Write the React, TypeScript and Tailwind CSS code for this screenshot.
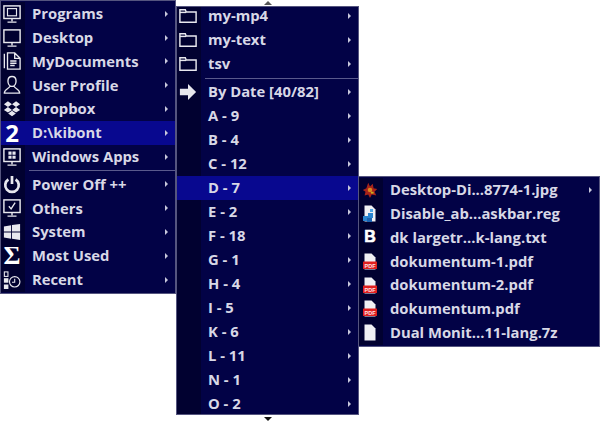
import React from "react";

const white = "#e8e8ee";

const Monitor = ({ inner }: { inner?: React.ReactNode }) => (
  <svg width="18" height="20" viewBox="0 0 20 22" fill="none" stroke={white}>
    <rect x="1" y="2" width="18" height="14" strokeWidth="1.600" />
    {inner}
    <path d="M10 16v3M5 20h10" strokeWidth="1.600" />
  </svg>
);

const FileDoc = () => (
  <svg width="18" height="20" viewBox="0 0 20 22" fill="none" stroke={white} strokeWidth="1.500">
    <path d="M1.500 3v16M5 2v18h14V8l-6-6zM13 2v6h6M8 11h7M8 13.500h7M8 16h5" />
  </svg>
);

const User = () => (
  <svg width="18" height="20" viewBox="0 0 20 22" fill="none" stroke={white} strokeWidth="1.500">
    <path d="M10 1.500c-3 0-4.500 2-4.500 5 0 3 1.500 6 4.500 6s4.500-3 4.500-6c0-3-1.500-5-4.500-5zM7.500 12.500c0 2.500-6 2.500-6 7.500h17c0-5-6-5-6-7.500" />
  </svg>
);

const Dropbox = () => (
  <svg width="18" height="18" viewBox="0 0 20 20" fill={white}>
    <path d="M5.500 1.500 1 4.700l4.500 3.100L10 4.700zM14.500 1.500 10 4.700l4.500 3.100L19 4.700zM5.500 7.800 1 11l4.500 3L10 11zM14.500 7.800 10 11l4.500 3 4.500-3zM5.700 15l4.300 3 4.300-3-4.300-3z" />
  </svg>
);

const Power = () => (
  <svg width="18" height="20" viewBox="0 0 20 22" fill="none" stroke={white} strokeWidth="3">
    <path d="M6 6a7.500 7.500 0 1 0 8 0M10 2v9" />
  </svg>
);

const Windows = () => (
  <svg width="18" height="18" viewBox="0 0 20 20" fill={white}>
    <path d="M1 4l8-1.500V9.500H1zM10 2.300 19 1v8.500h-9zM1 10.500h8v7L1 16zM10 10.500h9V19l-9-1.500z" />
  </svg>
);

const Recent = () => (
  <svg width="18" height="20" viewBox="0 0 20 22" fill="none" stroke={white}>
    <rect x="1.500" y="2" width="4" height="5" strokeWidth="1.200" />
    <rect x="1" y="9" width="5" height="5" fill={white} stroke="none" />
    <rect x="1" y="16" width="5" height="5" fill={white} stroke="none" />
    <circle cx="13" cy="13" r="5.800" strokeWidth="1.300" />
    <path d="M13 9.500v4h-3" strokeWidth="1.200" />
  </svg>
);

const Folder = () => (
  <svg width="18" height="18" viewBox="0 0 20 20" fill="none" stroke={white} strokeWidth="1.600">
    <path d="M1 17V3h6l1 2.500h11V17z" />
    <path d="M1 6h7" />
  </svg>
);

const ArrowRight = () => (
  <svg width="18" height="18" viewBox="0 0 20 20" fill={white}>
    <path d="M1 6.500h9V1l9 9-9 9v-5.500H1z" />
  </svg>
);

const PageBase = ({ children }: { children?: React.ReactNode }) => (
  <svg width="14" height="17" viewBox="0 0 14 17">
    <path d="M1.500 0.500h7l4 4v12h-11z" fill="#f0f0f4" />
    {children}
  </svg>
);

const Pdf = () => (
  <PageBase>
    <rect x="0" y="8.500" width="14" height="7.500" rx="0.500" fill="#e01f1f" />
    <text x="7" y="14.500" textAnchor="middle" fontSize="5.500" fontWeight="700" fill="#ffe4e4" fontFamily="'Liberation Sans', sans-serif">PDF</text>
  </PageBase>
);

const Reg = () => (
  <PageBase>
    <rect x="0" y="11" width="5" height="5" fill="#2a84d0" />
    <rect x="5" y="8" width="5" height="5" fill="#2a84d0" />
    <rect x="4" y="13" width="5" height="4" fill="#1c63b0" />
    <rect x="7" y="4" width="3" height="3" fill="#4ea6e6" />
  </PageBase>
);

const Jpg = () => (
  <svg width="18" height="18" viewBox="0 0 20 20">
    <path d="M8 2l2 4 3-3 1 5 4 1-3 3 2 4-5-1-2 4-2-4-4 1 1-4-3-2 4-2z" fill="#a8241a" />
    <circle cx="10" cy="10" r="2.500" fill="#d88a20" />
    <rect x="11" y="12" width="3" height="2" fill="#c8b020" />
  </svg>
);

const Arrow = () => (
  <span className="h-0 w-0 border-y-[3px] border-l-[3px] border-y-transparent border-l-[#c8c8dc]" />
);

type RowProps = {
  icon: React.ReactNode;
  label: string;
  arrow?: boolean;
  active?: boolean;
  height: string;
};

const Row = ({ icon, label, arrow = true, active, height }: RowProps) => (
  <div className={`flex shrink-0 items-center ${height} ${active ? "bg-[#08088f]" : ""}`}>
    <div className={`flex h-full w-[24px] shrink-0 items-center pl-[2px] ${active ? "" : "bg-[#010130]"}`}>
      <div className="flex w-[18px] items-center justify-center">{icon}</div>
    </div>
    <span className="mb-[1px] ml-[7px] flex-1 whitespace-nowrap text-[14.8px] font-bold text-[#d8d8e6]">{label}</span>
    {arrow && <span className="mr-[7px] flex"><Arrow /></span>}
  </div>
);

const Separator = () => (
  <div className="flex h-[4px] shrink-0 items-center">
    <div className="h-full w-[24px] bg-[#010130]" />
    <div className="ml-[4px] h-px flex-1 bg-[#5a5a8c]" />
  </div>
);

const first: { icon: React.ReactNode; label: string; active?: boolean }[] = [
  { icon: <Monitor inner={<rect x="5" y="5" width="10" height="8" strokeWidth="1.300" />} />, label: "Programs" },
  { icon: <Monitor />, label: "Desktop" },
  { icon: <FileDoc />, label: "MyDocuments" },
  { icon: <User />, label: "User Profile" },
  { icon: <Dropbox />, label: "Dropbox" },
  { icon: <span className="text-[24px] font-bold leading-none text-white">2</span>, label: "D:\\kibont", active: true },
  { icon: <Monitor inner={<path d="M6 5h3.500v3.500H6zM10.500 5H14v3.500h-3.500zM6 9.500h3.500V13H6zM10.500 9.500H14V13h-3.500z" fill={white} stroke="none" />} />, label: "Windows Apps" },
];

const firstBottom: { icon: React.ReactNode; label: string }[] = [
  { icon: <Power />, label: "Power Off ++" },
  { icon: <Monitor inner={<path d="M6.500 9l2.500 3 4.500-7" strokeWidth="1.500" />} />, label: "Others" },
  { icon: <Windows />, label: "System" },
  { icon: <span className="text-[26px] font-bold leading-none text-white" style={{ fontFamily: "'Liberation Serif', serif" }}>Σ</span>, label: "Most Used" },
  { icon: <Recent />, label: "Recent" },
];

const letters = ["A - 9", "B - 4", "C - 12", "D - 7", "E - 2", "F - 18", "G - 1", "H - 4", "I - 5", "K - 6", "L - 11", "N - 1", "O - 2"];

const files: { icon: React.ReactNode; label: string; arrow?: boolean }[] = [
  { icon: <Jpg />, label: "Desktop-Di...8774-1.jpg", arrow: true },
  { icon: <Reg />, label: "Disable_ab...askbar.reg" },
  { icon: <span className="text-[16px] font-bold leading-none text-white" style={{ fontFamily: "'Liberation Sans', sans-serif", WebkitTextStroke: "0.6px white" }}>B</span>, label: "dk largetr...k-lang.txt" },
  { icon: <Pdf />, label: "dokumentum-1.pdf" },
  { icon: <Pdf />, label: "dokumentum-2.pdf" },
  { icon: <Pdf />, label: "dokumentum.pdf" },
  { icon: <PageBase />, label: "Dual Monit...11-lang.7z" },
];

export default function App() {
  const h1 = "h-[23.8px]";
  const h2 = "h-[24px]";
  return (
    <div className="relative h-[422px] w-[600px] overflow-hidden bg-white" style={{ fontFamily: "'Open Sans', sans-serif" }}>
      <div className="absolute left-0 top-0 flex h-[294px] w-[176px] flex-col overflow-hidden border border-[#55557f] bg-[#020246] py-px">
        {first.map((r) => (
          <Row key={r.label} {...r} height={h1} />
        ))}
        <Separator />
        {firstBottom.map((r) => (
          <Row key={r.label} {...r} height={h1} />
        ))}
      </div>

      <div className="absolute left-[176px] top-0 flex h-[422px] w-[183px] flex-col">
        <div className="flex h-[6px] items-center justify-center bg-white">
          <span className="h-0 w-0 border-x-[4px] border-b-[4px] border-x-transparent border-b-[#555]" />
        </div>
        <div className="h-[409px] overflow-hidden border border-[#55557f] bg-[#020246]">
          <div className="-mt-[3px] flex flex-col">
            <Row icon={<Folder />} label="my-mp4" height={h2} />
            <Row icon={<Folder />} label="my-text" height={h2} />
            <Row icon={<Folder />} label="tsv" height={h2} />
            <Separator />
            <Row icon={<ArrowRight />} label="By Date [40/82]" height={h2} />
            {letters.map((l) => (
              <Row key={l} icon={null} label={l} active={l === "D - 7"} height={h2} />
            ))}
          </div>
        </div>
        <div className="flex h-[7px] items-center justify-center bg-white">
          <span className="h-0 w-0 border-x-[4px] border-t-[4px] border-x-transparent border-t-[#111]" />
        </div>
      </div>

      <div className="absolute left-[358px] top-[176px] flex h-[171px] w-[242px] flex-col overflow-hidden border border-[#55557f] bg-[#020246] py-px">
        {files.map((r) => (
          <Row key={r.label} {...r} arrow={r.arrow ?? false} height={h1} />
        ))}
      </div>
    </div>
  );
}
